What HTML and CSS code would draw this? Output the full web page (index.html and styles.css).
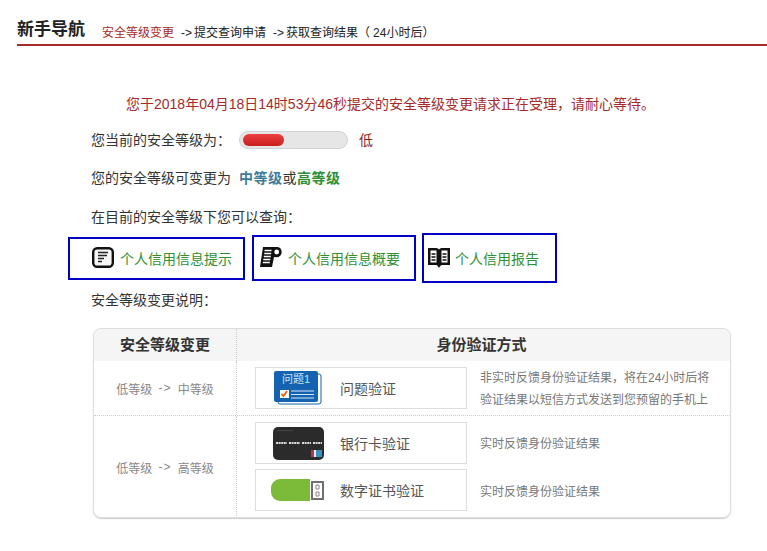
FILE: index.html
```html
<!DOCTYPE html>
<html lang="zh-CN">
<head>
<meta charset="utf-8">
<title>新手导航</title>
<link rel="stylesheet" href="styles.css">
</head>
<body>
<header class="guide">
  <h1 class="guide-title">新手导航</h1>
  <p class="steps"><span class="step-active">安全等级变更</span><span class="step-arrow">-&gt;</span>提交查询申请<span class="step-arrow">-&gt;</span>获取查询结果<span class="step-paren">（</span>24小时后）</p>
</header>
<main class="content">
  <p class="notice">您于2018年04月18日14时53分46秒提交的安全等级变更请求正在受理，请耐心等待。</p>
  <div class="row row-level">
    <span>您当前的安全等级为：</span>
    <span class="meter"><span class="meter-fill"></span></span>
    <span class="level-low">低</span>
  </div>
  <p class="row row-change">您的安全等级可变更为<b class="mid">中等级</b>或<b class="high">高等级</b></p>
  <p class="row row-query">在目前的安全等级下您可以查询：</p>
  <div class="links">
    <a class="link link-a">
      <svg class="link-icon" viewBox="0 0 22 22" width="22" height="22"><rect x="1.200" y="1.200" width="19.600" height="18.600" rx="4" fill="#f6f6f6" stroke="#111" stroke-width="2.400"/><path d="M6 5.500h10M6 8.500h9M6 11.500h6M6 14.500h4" stroke="#222" stroke-width="1.600" fill="none"/></svg>
      个人信用信息提示
    </a>
    <a class="link link-b">
      <svg class="link-icon" viewBox="0 0 22 22" width="22" height="22"><path d="M3 0h14v10h-3l-2 10H0z" fill="#111"/><circle cx="16.500" cy="5" r="5.200" fill="#111"/><circle cx="16.700" cy="5" r="2.400" fill="#fff"/><path d="M4.500 3.500h7M4.200 6.500h7M3.800 9.500h7M3.300 12.500h7M2.800 15.500h7" stroke="#fff" stroke-width="1.400"/></svg>
      个人信用信息概要
    </a>
    <a class="link link-c">
      <svg class="link-icon" viewBox="0 0 22 22" width="22" height="22"><path d="M0 1h8c2 0 3 1 3 2 0-1 1-2 3-2h8v17h-8c-1 0-2 1-3 3-1-2-2-3-3-3H0z" fill="#111"/><path d="M2.500 3.500h6v12h-6zM13.500 3.500h6v12h-6z" fill="#fff"/><path d="M3.500 7h4M3.500 10h4M3.500 13h4M14.500 7h4M14.500 10h4M14.500 13h4" stroke="#111" stroke-width="1.600"/></svg>
      个人信用报告
    </a>
  </div>
  <p class="row row-explain">安全等级变更说明：</p>
  <section class="panel">
    <div class="panel-head">
      <div class="col-left">安全等级变更</div>
      <div class="col-right head-title">身份验证方式</div>
    </div>
    <div class="panel-row panel-row-first">
      <div class="col-left path">低等级 <span class="path-arrow">-&gt;</span> 中等级</div>
      <div class="col-right methods">
        <div class="method">
          <div class="card">
            <svg class="card-icon" viewBox="0 0 84 40" width="84" height="40">
              <rect x="22" y="6" width="43" height="30" rx="2" fill="#fff" stroke="#1560ab" stroke-width="1"/>
              <rect x="18" y="3" width="44" height="31" rx="2" fill="#1463b0"/>
              <text x="40" y="15" class="card-svg-text">问题1</text>
              <rect x="24" y="22" width="9" height="8" fill="#fff"/>
              <path d="M25.500 26l2 2 3.500-5" stroke="#e8641c" stroke-width="1.800" fill="none"/>
              <path d="M35 23h23M35 26.500h23M35 30h23" stroke="#d8e6f5" stroke-width="1"/>
            </svg>
            <span>问题验证</span>
          </div>
          <p class="desc">非实时反馈身份验证结果，将在24小时后将<br>验证结果以短信方式发送到您预留的手机上</p>
        </div>
      </div>
    </div>
    <div class="panel-row">
      <div class="col-left path">低等级 <span class="path-arrow">-&gt;</span> 高等级</div>
      <div class="col-right methods">
        <div class="method">
          <div class="card">
            <svg class="card-icon" viewBox="0 0 84 40" width="84" height="40">
              <rect x="17" y="4" width="51" height="33" rx="5" fill="#2b2b2c"/>
              <path d="M21 7.500h16" stroke="#444" stroke-width="1"/>
              <path d="M20 20h11M33 20h11M46 20h9M57 20h9" stroke="#ddd" stroke-width="2" stroke-dasharray="2 .6"/>
              <rect x="55" y="27" width="3" height="7" fill="#c2305a"/>
              <rect x="58" y="27" width="2" height="7" fill="#eee"/>
              <rect x="60" y="27" width="6" height="7" fill="#3d8fc0"/>
            </svg>
            <span>银行卡验证</span>
          </div>
          <p class="desc">实时反馈身份验证结果</p>
        </div>
        <div class="method">
          <div class="card">
            <svg class="card-icon" viewBox="0 0 84 40" width="84" height="40">
              <path d="M24 9h30v22H24a9 9 0 0 1-9-9v-4a9 9 0 0 1 9-9z" fill="#7cba3a"/>
              <rect x="56" y="12" width="11" height="17" fill="#fff" stroke="#707070" stroke-width="2"/>
              <path d="M60 15h3v4h-3zM60 22h3v4h-3z" fill="none" stroke="#888" stroke-width="1"/>
            </svg>
            <span>数字证书验证</span>
          </div>
          <p class="desc desc-low">实时反馈身份验证结果</p>
        </div>
      </div>
    </div>
  </section>
</main>
</body>
</html>
```
FILE: styles.css
```css
* { box-sizing: border-box; }
html, body { margin: 0; padding: 0; }
body {
  width: 767px;
  height: 551px;
  overflow: hidden;
  background: #fff;
  color: #333;
  font-family: "Liberation Sans", "Noto Sans CJK SC", sans-serif;
  font-size: 14px;
  text-spacing-trim: space-all;
}
p, h1 { margin: 0; }

.guide {
  margin-left: 17px;
  height: 46px;
  border-bottom: 2px solid #a52a2a;
  display: flex;
  align-items: flex-end;
}
.guide-title {
  font-size: 17px;
  font-weight: 700;
  line-height: 24px;
  margin-bottom: 2px;
  color: #222;
  width: 85px;
}
.steps {
  font-size: 12px;
  line-height: 20px;
  margin-bottom: 1px;
  color: #222;
}
.step-active { color: #a52a2a; }
.step-arrow { margin: 0 2px 0 7px; }
.step-paren { margin-right: 3px; }

.content { padding-top: 46px; }
.notice {
  padding-left: 126px;
  line-height: 24px;
  color: #a52a2a;
}
.row { line-height: 24px; padding-left: 91px; }
.row-level {
  margin-top: 12px;
  display: flex;
  align-items: center;
}
.meter {
  width: 109px;
  height: 18px;
  margin-left: 8px;
  background: #e6e6e6;
  border: 1px solid #d2d2d2;
  border-radius: 9px;
  padding: 2px 3px;
}
.meter-fill {
  display: block;
  width: 41px;
  height: 12px;
  border-radius: 6px;
  background: linear-gradient(#ee4040, #c81e1e);
}
.level-low { margin-left: 11px; color: #8f1c1c; }
.row-change { margin-top: 14px; }
.mid { color: #3f7c9c; margin-left: 8px; letter-spacing: .5px; }
.high { color: #2f8f35; letter-spacing: .5px; margin-left: .5px; }
.row-query { margin-top: 15px; }

.links {
  margin: 4px 0 0 68px;
  display: flex;
  align-items: center;
  height: 50px;
  gap: 6px;
}
.link {
  display: flex;
  align-items: center;
  border: 2px solid #0000c4;
  color: #2f8f35;
  gap: 6px;
}
.link-a { width: 177px; height: 43px; padding-left: 22px; margin-right: 1px; }
.link-b { width: 164px; height: 46px; padding-left: 6px; }
.link-c { width: 135px; height: 50px; padding-left: 4px; gap: 5px; }
.row-explain { margin-top: 5px; }

.panel {
  margin: 16px 0 0 93px;
  width: 638px;
  height: 190px;
  border: 1px solid #ddd;
  border-radius: 8px;
  box-shadow: 0 1px 1px #ccc;
  overflow: hidden;
}
.panel-head {
  display: flex;
  height: 32px;
  line-height: 32px;
  background: #f5f5f5;
  font-size: 15px;
  font-weight: 700;
  text-align: center;
  color: #333;
}
.col-left {
  width: 143px;
  flex: none;
  border-right: 1px dotted #ccc;
}
.col-right { flex: 1; }
.head-title { padding-right: 4px; }
.panel-row { display: flex; }
.panel-row-first { height: 55px; border-bottom: 1px dotted #ccc; }
.panel-row:not(.panel-row-first) { height: 102px; }
.path {
  display: flex;
  align-items: center;
  justify-content: center;
  font-size: 12px;
  color: #888;
  white-space: pre;
}
.path-arrow { letter-spacing: 1px; margin: 0 3px; }
.methods {
  padding: 6px 0 0 18px;
  display: flex;
  flex-direction: column;
  gap: 5px;
}
.method { display: flex; align-items: center; height: 42px; }
.card {
  width: 212px;
  height: 42px;
  border: 1px solid #ddd;
  display: flex;
  align-items: center;
  color: #555;
  flex: none;
}
.card-icon { flex: none; }
.card-svg-text {
  font-size: 11px;
  fill: #cfe2f5;
  text-anchor: middle;
}
.desc {
  margin-left: 13px;
  padding-top: 2px;
  font-size: 12px;
  line-height: 22px;
  color: #777;
}
.desc-low { padding-top: 4px; }
```
